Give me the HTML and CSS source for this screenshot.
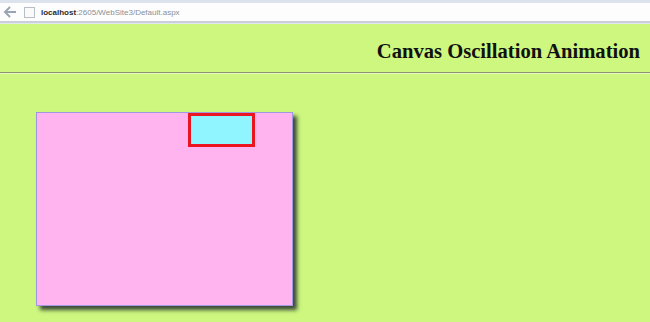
FILE: index.html
```html
<!DOCTYPE html>
<html lang="en">
<head>
    <meta charset="UTF-8" />
    <title>Canvas Oscillation Animation</title>
    <link rel="stylesheet" href="styles.css">
</head>
<body>
<!-- Barra del navegador -->
<div class="chrome">
    <svg class="back" width="14" height="12" viewBox="0 0 14 12">
        <path d="M7 1 L2 6 L7 11 M2 6 H13" fill="none" stroke="#9aa4b4" stroke-width="2"/>
    </svg>
    <span class="page-icon"></span>
    <div class="address"><b>localhost</b>:2605/WebSite3/Default.aspx</div>
</div>

<div class="page">
    <h1>Canvas Oscillation Animation</h1>
    <hr>
    <div class="stage">
        <div class="canvas">
            <div class="box"></div>
        </div>
    </div>
</div>
</body>
</html>
```

FILE: styles.css
```css
body {
    margin: 0;
    background-color: #cdf77f;
    font-family: "Liberation Serif", serif;
}

/* Barra del navegador */
.chrome {
    height: 18px;
    display: flex;
    align-items: center;
    background-color: #fdfdfd;
    border-top: 3px solid #dde3ec;
    border-bottom: 2px solid #c9d0dc;
    box-shadow: 0 1px 0 #e3e8ef;
}

.back {
    margin-left: 3px;
    width: 14px;
}

.page-icon {
    width: 9px;
    height: 9px;
    margin-left: 7px;
    border: 1px solid #b8bec8;
    background: #fafafa;
}

.address {
    margin-left: 6px;
    font-family: "Liberation Sans", Arial, sans-serif;
    font-size: 8px;
    color: #8a8f98;
}

.address b {
    color: #2a2a2a;
    font-weight: bold;
}

.page {
    padding-top: 1px;
}

h1 {
    text-align: right;
    font-size: 20.6px;
    margin: 15px 10px 0 0;
    line-height: 24px;
    color: #111;
}

hr {
    margin: 9px 0 0 0;
    border: none;
    border-top: 1px solid #8b9470;
    border-bottom: 1px solid #e6f7c0;
}

.stage {
    padding: 38px 0 20px 36px;
}

.canvas {
    position: relative;
    width: 255px;
    height: 192px;
    background-color: #ffb3ef;
    border: 1px solid #9f97e0;
    box-shadow: 4px 4px 4px #3d4a3a;
}

.box {
    position: absolute;
    left: 151px;
    top: 0;
    width: 61px;
    height: 28px;
    background-color: #90f5ff;
    border: 3px solid #ea1520;
}
```
